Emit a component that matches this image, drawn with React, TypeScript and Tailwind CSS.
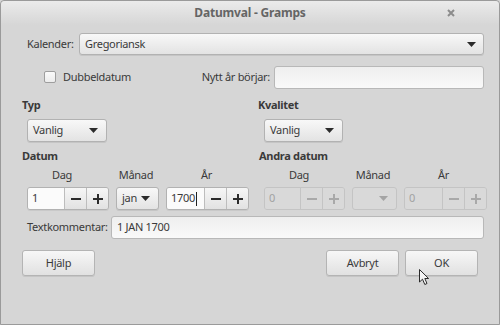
import React from "react";

function Arrow({ disabled }: { disabled?: boolean }) {
  return (
    <svg width="9" height="5" viewBox="0 0 9 5" className="shrink-0">
      <path d="M0 0 L9 0 L4.5 5 Z" fill={disabled ? "#a4a4a4" : "#2b2b2b"} />
    </svg>
  );
}

function Combo({ text, width, disabled }: { text: string; width: string; disabled?: boolean }) {
  return (
    <div
      className={`flex h-[23px] ${width} shrink-0 items-center justify-between rounded-[3px] border pl-[5px] pr-[8px] ${
        disabled
          ? "border-[#c4c4c4] bg-[#d9d9d9]"
          : "border-[#b2b2b2] bg-gradient-to-b from-[#f8f8f8] to-[#e3e3e3] shadow-[0_1px_0_rgba(0,0,0,0.08)]"
      }`}
    >
      <span>{text}</span>
      <Arrow disabled={disabled} />
    </div>
  );
}

function Minus({ c }: { c: string }) {
  return (
    <svg width="10" height="10" viewBox="0 0 10 10">
      <rect x="0" y="4" width="10" height="2" fill={c} />
    </svg>
  );
}

function Plus({ c }: { c: string }) {
  return (
    <svg width="10" height="10" viewBox="0 0 10 10">
      <rect x="0" y="4" width="10" height="2" fill={c} />
      <rect x="4" y="0" width="2" height="10" fill={c} />
    </svg>
  );
}

function Spin({
  value,
  entry,
  btn,
  disabled,
  caret,
}: {
  value: string;
  entry: string;
  btn: string;
  disabled?: boolean;
  caret?: boolean;
}) {
  const ic = disabled ? "#a9a9a9" : "#2b2b2b";
  return (
    <div
      className={`flex h-[23px] shrink-0 overflow-hidden rounded-[3px] border ${
        disabled ? "border-[#c4c4c4]" : "border-[#b2b2b2] shadow-[0_1px_0_rgba(0,0,0,0.06)]"
      }`}
    >
      <div
        className={`flex ${entry} items-center pl-[4px] ${
          disabled ? "bg-[#d9d9d9] text-[#a2a2a2]" : "bg-[#fbfbfb]"
        }`}
      >
        <span>{value}</span>
        {caret && <span className="ml-[1px] h-[14px] w-px bg-[#222]" />}
      </div>
      <div
        className={`flex ${btn} items-center justify-center border-l ${
          disabled ? "border-[#c4c4c4] bg-[#d9d9d9]" : "border-[#bdbdbd] bg-gradient-to-b from-[#f6f6f6] to-[#e2e2e2]"
        }`}
      >
        <Minus c={ic} />
      </div>
      <div
        className={`flex ${btn} items-center justify-center border-l ${
          disabled ? "border-[#c4c4c4] bg-[#d9d9d9]" : "border-[#bdbdbd] bg-gradient-to-b from-[#f6f6f6] to-[#e2e2e2]"
        }`}
      >
        <Plus c={ic} />
      </div>
    </div>
  );
}

function Entry({ text, className }: { text?: string; className: string }) {
  return (
    <div
      className={`flex h-[23px] items-center rounded-[3px] border border-[#b8b8b8] bg-gradient-to-b from-[#efefef] to-[#f9f9f9] pl-[5px] ${className}`}
    >
      {text}
    </div>
  );
}

function Button({ label }: { label: string }) {
  return (
    <div className="flex h-[26px] w-[73px] items-center justify-center rounded-[3px] border border-[#b4b4b4] bg-gradient-to-b from-[#f7f7f7] to-[#e1e1e1] shadow-[0_1px_0_rgba(0,0,0,0.08)]">
      {label}
    </div>
  );
}

function DateBlock({ title, disabled }: { title: string; disabled?: boolean }) {
  return (
    <>
      <div className="mt-[6px] h-[16px] font-bold leading-[16px]">{title}</div>
      <div className="mt-[3px] flex h-[16px] leading-[16px] pl-[5px]">
        <div className="w-[80px] pr-[10px] text-center">Dag</div>
        <div className="ml-[7px] w-[44px] text-center">Månad</div>
        <div className="ml-[7px] w-[83px] text-center">År</div>
      </div>
      <div className="mt-[4px] flex pl-[5px]">
        {disabled ? (
          <Spin value="0" entry="w-[35px]" btn="w-[22px]" disabled />
        ) : (
          <Spin value="1" entry="w-[36px]" btn="w-[22px]" />
        )}
        <div className="ml-[7px]">
          {disabled ? <Combo text="" width="w-[45px]" disabled /> : <Combo text="jan" width="w-[43px]" />}
        </div>
        <div className="ml-[7px]">
          {disabled ? (
            <Spin value="0" entry="w-[37px]" btn="w-[22px]" disabled />
          ) : (
            <Spin value="1700" entry="w-[37px]" btn="w-[22px]" caret />
          )}
        </div>
      </div>
    </>
  );
}

export default function App() {
  return (
    <div className="h-[325px] w-[500px] bg-[#d6d6d6] font-['Noto_Sans',sans-serif] text-[11px] tracking-[-0.3px] text-[#3a3a3a]">
      <div className="relative flex h-full w-full flex-col rounded-t-[4px] border border-[#9a9a9a] bg-[#d6d6d6]">
        {/* Title bar */}
        <div className="relative flex h-[24px] shrink-0 items-center justify-center rounded-t-[4px] bg-gradient-to-b from-[#ebebeb] to-[#d6d6d6]">
          <span className="text-[12px] font-bold tracking-[-0.2px] text-[#656565]">Datumval - Gramps</span>
          <svg width="8" height="8" viewBox="0 0 8 8" className="absolute right-[44px] top-[8px]">
            <path d="M1 1 L7 7 M7 1 L1 7" stroke="#8c8c8c" strokeWidth="2" />
          </svg>
        </div>

        <div className="flex flex-col pl-[21px] pr-[15px]">
          {/* Kalender */}
          <div className="mt-[8px] flex items-center pl-[5px]">
            <span className="w-[52px]">Kalender:</span>
            <div className="flex h-[22px] flex-1 items-center justify-between rounded-[3px] border border-[#b2b2b2] bg-gradient-to-b from-[#f8f8f8] to-[#e3e3e3] pl-[5px] pr-[7px] shadow-[0_1px_0_rgba(0,0,0,0.08)]">
              <span>Gregoriansk</span>
              <Arrow />
            </div>
          </div>

          {/* Dubbeldatum row */}
          <div className="mt-[11px] flex h-[22px] items-center">
            <div className="flex w-[179px] items-center pl-[22px]">
              <div className="h-[12px] w-[12px] rounded-[2px] border border-[#9e9e9e] bg-gradient-to-b from-[#fafafa] to-[#ececec]" />
              <span className="ml-[7px]">Dubbeldatum</span>
            </div>
            <span className="w-[73px] whitespace-nowrap pr-[4px] text-right">Nytt år börjar:</span>
            <Entry className="h-[22px] flex-1" />
          </div>

          {/* Type / quality + dates */}
          <div className="grid grid-cols-[236px_1fr]">
            <div className="flex flex-col">
              <div className="mt-[9px] h-[16px] font-bold leading-[16px]">Typ</div>
              <div className="mt-[6px] pl-[5px]">
                <Combo text="Vanlig" width="w-[80px]" />
              </div>
              <DateBlock title="Datum" />
            </div>
            <div className="flex flex-col">
              <div className="mt-[9px] h-[16px] font-bold leading-[16px]">Kvalitet</div>
              <div className="mt-[6px] pl-[6px]">
                <Combo text="Vanlig" width="w-[79px]" />
              </div>
              <div className="pl-[1px]">
                <DateBlock title="Andra datum" disabled />
              </div>
            </div>
          </div>

          {/* Textkommentar */}
          <div className="mt-[6px] flex items-center pl-[5px]">
            <span className="w-[84px] whitespace-nowrap pr-[4px] text-right">Textkommentar:</span>
            <Entry text="1 JAN 1700" className="flex-1" />
          </div>

          {/* Buttons */}
          <div className="mt-[11px] flex items-center pr-[6px]">
            <Button label="Hjälp" />
            <div className="flex-1" />
            <Button label="Avbryt" />
            <div className="ml-[6px]">
              <Button label="OK" />
            </div>
          </div>
        </div>

        {/* Mouse pointer */}
        <svg width="12" height="17" viewBox="0 0 12 17" className="absolute left-[418px] top-[268px]">
          <path
            d="M0.5 0.5 L0.5 13 L3.5 10.2 L5.8 15.5 L8 14.5 L5.8 9.5 L9.6 9.5 Z"
            fill="#f4f4f4"
            stroke="#2a2a2a"
            strokeWidth="1"
            strokeLinejoin="round"
          />
        </svg>
      </div>
    </div>
  );
}
